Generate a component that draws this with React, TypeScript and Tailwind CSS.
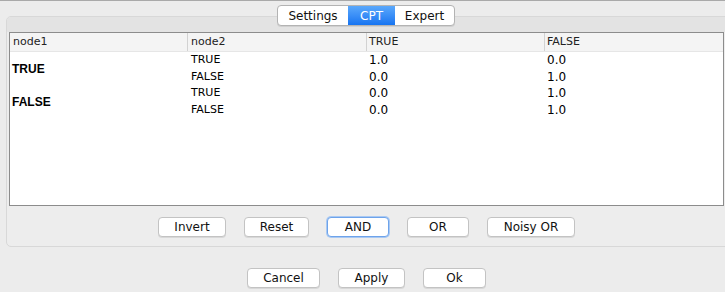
import React from "react";

const font = { fontFamily: '"DejaVu Sans", "Liberation Sans", sans-serif' };

function Btn({ label, w, focus }: { label: string; w: string; focus?: boolean }) {
  return (
    <div
      className={
        "h-[20px] flex items-center justify-center rounded-[4px] bg-white text-[12px] text-[#111] " +
        w +
        (focus
          ? " border border-[#6ea3ea] shadow-[0_0_0_1px_#a9c9f3]"
          : " border border-[#c3c3c3] shadow-[0_1px_0_#d8d8d8]")
      }
    >
      {label}
    </div>
  );
}

const rows = [
  { n2: "TRUE", t: "1.0", f: "0.0" },
  { n2: "FALSE", t: "0.0", f: "1.0" },
  { n2: "TRUE", t: "0.0", f: "1.0" },
  { n2: "FALSE", t: "0.0", f: "1.0" },
];

const boldStyle = { fontFamily: '"Liberation Sans", sans-serif', fontSize: "12px" };

export default function App() {
  return (
    <div
      className="w-[725px] h-[292px] bg-[#ececec] border-t border-[#a9a9a9] overflow-hidden flex flex-col"
      style={font}
    >
      {/* segmented control */}
      <div className="relative z-10 ml-[277px] mt-[4px] -mb-[10px] flex h-[21px] w-[178px] rounded-[4px] border border-[#b3b3b3] bg-white text-[12px] overflow-hidden shadow-[0_1px_0_#d0d0d0]">
        <div className="w-[70px] flex items-center justify-center text-[#111]">Settings</div>
        <div className="w-[47px] flex items-center justify-center text-white bg-gradient-to-b from-[#5aa8fc] to-[#1574f1]">
          CPT
        </div>
        <div className="flex-1 flex items-center justify-center text-[#111]">Expert</div>
      </div>

      {/* tab pane */}
      <div className="ml-[6px] w-[740px] h-[231px] rounded-[5px] border border-[#d8d8d8] bg-[#ededed] flex flex-col overflow-hidden">
        <div className="h-[15px] bg-[#e3e3e3] shrink-0" />
        <div className="ml-[2px] w-[715px] h-[174px] border border-[#8c8c8c] bg-white flex flex-col">
          {/* header */}
          <div className="h-[19px] bg-[#f4f4f4] grid grid-cols-[178px_179px_178px_1fr] text-[11px] text-[#222] border-b border-[#e6e6e6]">
            <div className="pl-[3px] flex items-center border-r border-[#d2d2d2]">node1</div>
            <div className="pl-[3px] flex items-center border-r border-[#d2d2d2]">node2</div>
            <div className="pl-[2px] flex items-center border-r border-[#d2d2d2]">TRUE</div>
            <div className="pl-[2px] flex items-center">FALSE</div>
          </div>
          {/* body */}
          <div className="grid grid-cols-[178px_179px_178px_1fr] grid-rows-[16.5px_16.5px_16.5px_16.5px]">
            <div className="row-span-2 pl-[2px] flex items-center font-bold text-black" style={boldStyle}>
              TRUE
            </div>
            {rows.slice(0, 2).map((r, i) => (
              <React.Fragment key={"a" + i}>
                <div className="pl-[3px] flex items-center text-[11px] text-black">{r.n2}</div>
                <div className="pl-[2px] flex items-center text-[12px] text-black">{r.t}</div>
                <div className="pl-[2px] flex items-center text-[12px] text-black">{r.f}</div>
              </React.Fragment>
            ))}
            <div className="row-span-2 pl-[2px] flex items-center font-bold text-black" style={boldStyle}>
              FALSE
            </div>
            {rows.slice(2).map((r, i) => (
              <React.Fragment key={"b" + i}>
                <div className="pl-[3px] flex items-center text-[11px] text-black">{r.n2}</div>
                <div className="pl-[2px] flex items-center text-[12px] text-black">{r.t}</div>
                <div className="pl-[2px] flex items-center text-[12px] text-black">{r.f}</div>
              </React.Fragment>
            ))}
          </div>
        </div>
        <div className="ml-[2px] w-[715px] mt-[11px] flex justify-center gap-[18px]">
          <Btn label="Invert" w="w-[68px]" />
          <Btn label="Reset" w="w-[65px]" />
          <Btn label="AND" w="w-[62px]" focus />
          <Btn label="OR" w="w-[62px]" />
          <Btn label="Noisy OR" w="w-[88px]" />
        </div>
      </div>

      {/* bottom buttons */}
      <div className="w-[733px] mt-[21px] flex justify-center gap-[18px]">
        <Btn label="Cancel" w="w-[73px]" />
        <Btn label="Apply" w="w-[67px]" />
        <Btn label="Ok" w="w-[63px]" />
      </div>
    </div>
  );
}
